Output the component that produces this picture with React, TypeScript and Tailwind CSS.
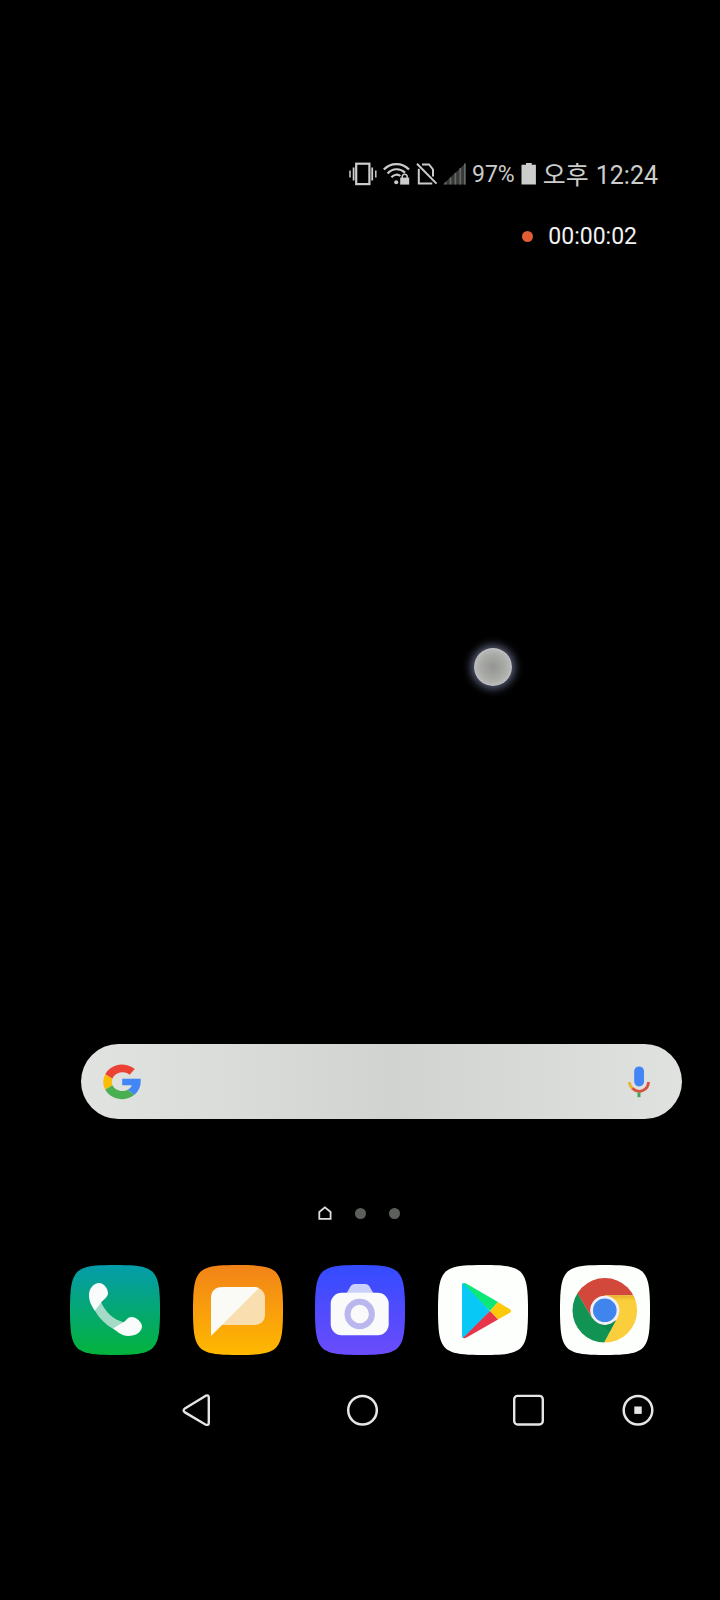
import type { ReactNode } from 'react';

const SQUIRCLE =
  'M45 0C60 0 70 .6 76.6 3.2C82 5.5 84.5 8 86.8 13.4C89.4 20 90 30 90 45C90 60 89.4 70 86.8 76.6C84.5 82 82 84.5 76.6 86.8C70 89.4 60 90 45 90C30 90 20 89.4 13.4 86.8C8 84.5 5.5 82 3.2 76.6C.6 70 0 60 0 45C0 30 .6 20 3.2 13.4C5.5 8 8 5.5 13.4 3.2C20 .6 30 0 45 0Z';

function AppIcon({ id, label, from, to, children }: { id: string; label: string; from: string; to: string; children: ReactNode }) {
  return (
    <button type="button" aria-label={label}>
      <svg viewBox="0 0 90 90" className="block size-[90px]">
        <defs>
          <linearGradient id={id} x1="0" y1="0" x2="0" y2="1">
            <stop offset="0" stopColor={from} />
            <stop offset="1" stopColor={to} />
          </linearGradient>
        </defs>
        <path d={SQUIRCLE} fill={`url(#${id})`} />
        {children}
      </svg>
    </button>
  );
}

function StatusBar() {
  return (
    <header className="flex h-7 items-center justify-end pr-[62px] text-[#cbcdcb]">
      <svg viewBox="0 0 28 24" className="h-6 w-7" fill="none" stroke="currentColor">
        <rect x="7.2" y="1.7" width="13.2" height="20.4" strokeWidth="2.2" />
        <path d="M4.6 5.5v13M23.2 5.5v13" strokeWidth="1.8" />
        <path d="M1 8.5v7M26.8 8.5v7" strokeWidth="1.5" />
      </svg>
      <svg viewBox="0 0 27 24" className="ml-1.5 h-6 w-[27px]" fill="none" stroke="currentColor" strokeWidth="2.2">
        <path d="M.8 7.5C7.6.2 19.2.2 26 7.5" />
        <path d="M4.6 11.4C9.7 6 17 6 22 10.6" />
        <path d="M8.4 15.3C11 12.2 15 12 17.3 14" />
        <circle cx="13.2" cy="20.3" r="2" fill="currentColor" stroke="none" />
        <path d="M19.2 16.3V15a2.5 2.8 0 0 1 5 0v1.3" strokeWidth="1.5" />
        <rect x="17.2" y="15.6" width="9" height="7" fill="currentColor" stroke="none" />
      </svg>
      <svg viewBox="0 0 22 24" className="ml-1.5 h-6 w-[22px]" fill="none" stroke="currentColor" strokeWidth="2">
        <path d="M6 2.4H13L17 7.5V14.5" />
        <path d="M2.8 6.8V21.4H16.3" />
        <path d="M1 1.7L20.5 21.6" />
      </svg>
      <svg viewBox="0 0 24 24" className="ml-1 h-6 w-6">
        <path d="M23.5 1.2V22.5H.8Z" fill="#383a38" />
        <path d="M3.5 20V22.5M8.5 15.5V22.5M13.4 11V22.5M18.3 6V22.5M22.8 1.5V22.5" stroke="#686a68" strokeWidth="1.6" />
      </svg>
      <span className="ml-1.5 pt-0.5 font-['Roboto',sans-serif] text-[23px] leading-7">97%</span>
      <svg viewBox="0 0 16 24" className="ml-1.5 h-6 w-4" fill="currentColor">
        <path d="M5 .9H10.7V2.7H14.9V22.5H.5V2.7H5Z" />
      </svg>
      <time className="ml-1.5 flex items-baseline gap-[7px] text-[25px] leading-7">
        <span className="font-['Noto_Sans_CJK_KR',sans-serif]">오후</span>
        <span className="font-['Roboto',sans-serif]">12:24</span>
      </time>
    </header>
  );
}

function SearchBar() {
  return (
    <form
      role="search"
      className="mr-[38px] ml-[81px] flex h-[75px] items-center rounded-full bg-[linear-gradient(90deg,#e0e3df,#dadcd9_25%,#d1d3d0_52%,#d9dbd8_78%,#e0e2df)] pr-8 pl-[22px]"
      onSubmit={(event) => event.preventDefault()}
    >
      <svg viewBox="0 0 38 36" className="h-9 w-[38px] shrink-0" aria-hidden="true">
        <path d="M31.8 5A19 17.6 0 0 0 2.2 10.2L9.4 14.8A10.6 9.8 0 0 1 26.6 10.7Z" fill="#ea4335" />
        <path d="M2.2 10.2A18 17.5 0 0 0 2.2 25.8L9.4 21.3A10.5 10 0 0 1 9.4 14.8Z" fill="#fbbc05" />
        <path d="M2.2 25.8A19 17.6 0 0 0 31.5 30.8L24.8 25.8A11 9.8 0 0 1 9.4 21.3Z" fill="#4aaf50" />
        <path d="M19.2 14.8H37.6C38.3 21.5 36.2 27 31.5 30.8L24.8 25.8C27 24.5 28.2 23 28.8 21.3H19.2Z" fill="#4285f4" />
      </svg>
      <input type="search" aria-label="Google 검색" className="h-full min-w-0 flex-1 bg-transparent px-4 font-['Roboto','Noto_Sans_CJK_KR',sans-serif] text-2xl text-gray-800 outline-none" />
      <button type="button" aria-label="음성 검색">
        <svg viewBox="0 0 22 32" className="block h-8 w-[22px]" fill="none">
          <rect x="6.2" y=".4" width="9.8" height="20" rx="4.9" fill="#4285f4" />
          <path d="M1.5 16C1.5 18.6 2.7 21 4.7 22.7" stroke="#eab32e" strokeWidth="2.8" />
          <path d="M4.4 22.4C11 28.3 20.3 24.3 20.5 16" stroke="#d95040" strokeWidth="2.8" />
          <path d="M11 26.5V31.2" stroke="#43a35a" strokeWidth="3" />
        </svg>
      </button>
    </form>
  );
}

function Dock() {
  return (
    <nav aria-label="앱" className="mt-11 flex justify-between px-[70px]">
      <AppIcon id="phone-bg" label="전화" from="#059cab" to="#03b33c">
        <path d="M25 46C30 54 36 60 43.5 64L53 57C43 54 36 48 31 37Z" fill="#a5d9c8" />
        <path d="M25 46C20 39 19 34 19 30C19 23 24 18 29 18C34 18 38 24 38 28C38 32 34 34 31.5 37Z" fill="#fafcfb" />
        <path d="M43 63.5L52.5 57.5C56 57 57 52 61.5 52C66 52 72 57 72 61C72 67 66 71 58 71C53 71 48 67.5 43 63.5Z" fill="#fafcfb" />
      </AppIcon>
      <AppIcon id="message-bg" label="메시지" from="#f28318" to="#ffb900">
        <path d="M65 23C70 25 72 29 72 33V49C72 56 68 60 61 60H28Z" fill="#f9dfb0" />
        <path d="M18 71V33C18 26 22 22 29 22H60C63 22 64.5 22.3 66 23Z" fill="#fafaf7" />
      </AppIcon>
      <AppIcon id="camera-bg" label="카메라" from="#344bff" to="#6b4cfb">
        <path d="M30 29C35 26 34 19 40 19H50C56 19 55 26 60 29Z" fill="#cbd0fb" />
        <rect x="15.7" y="27.7" width="58" height="42.5" rx="11" fill="#fafafa" />
        <circle cx="44.7" cy="49" r="12.2" fill="none" stroke="#bab7ee" strokeWidth="6" />
      </AppIcon>
      <AppIcon id="play-bg" label="Play 스토어" from="#fdfffd" to="#fdfffd">
        <path d="M24 20Q24 17 27 18.5L52 46L27 72.5Q24 74 24 71Z" fill="#08c9f5" />
        <path d="M25 18Q27 17.5 29 19L60 37L52 46Z" fill="#0be878" />
        <path d="M60 37L72 44.3Q74 46 72 47.7L60 54.5L52 46Z" fill="#fdc90b" />
        <path d="M52 46L60 54.5L29 72.2Q27 73.5 25 73Z" fill="#e93549" />
      </AppIcon>
      <AppIcon id="chrome-bg" label="Chrome" from="#fdfffd" to="#fdfffd">
        <defs>
          <clipPath id="chrome-disc">
            <circle cx="44.8" cy="45.3" r="32.3" />
          </clipPath>
          <linearGradient id="chrome-shade" x1="0" y1="0" x2="0" y2="1">
            <stop offset="0" stopColor="#e8b22c" />
            <stop offset="1" stopColor="#fbcf3c" />
          </linearGradient>
        </defs>
        <g clipPath="url(#chrome-disc)">
          <path d="M10 10H80V30.5H45L32 52.7L18.5 30.5L10 25Z" fill="#d2483a" />
          <path d="M44.8 30.5H80V80H42.5L57.5 52.7Z" fill="#fbcf3c" />
          <path d="M44.8 30.5H78L76 36H54Z" fill="url(#chrome-shade)" />
          <path d="M17.8 29L32 52.7L45 60L56 55.3L42.8 80H10V29Z" fill="#119453" />
          <path d="M34 56L45 60L56 55.3L50 66.5Z" fill="#0b7f47" opacity=".5" />
        </g>
        <circle cx="44.8" cy="45.3" r="14.6" fill="#eeeff7" />
        <circle cx="44.8" cy="45.3" r="11.8" fill="#4085ee" />
      </AppIcon>
    </nav>
  );
}

function SystemNavigation() {
  return (
    <nav aria-label="시스템" className="mt-[39px] flex pr-[66px] pl-[25%] text-[#e6e7e5]">
      <div className="flex flex-1 justify-between">
        <button type="button" aria-label="뒤로">
          <svg viewBox="0 0 32 32" className="block size-8" fill="none" stroke="currentColor" strokeWidth="2.4" strokeLinejoin="round">
            <path d="M25.4 1.9Q28.8.3 28.8 3.7V28.6Q28.8 32 25.4 30.5L4.9 18.4Q2.4 16.4 4.9 14.4Z" />
          </svg>
        </button>
        <button type="button" aria-label="홈">
          <svg viewBox="0 0 32 32" className="block size-8" fill="none" stroke="currentColor" strokeWidth="2.5">
            <circle cx="16.5" cy="16.3" r="14.3" />
          </svg>
        </button>
        <button type="button" aria-label="최근 앱">
          <svg viewBox="0 0 32 32" className="block size-8" fill="none" stroke="currentColor" strokeWidth="2.4">
            <rect x="2.2" y="1.9" width="28.6" height="28.6" rx="3.4" />
          </svg>
        </button>
      </div>
      <button type="button" aria-label="화면 고정" className="ml-[78px]">
        <svg viewBox="0 0 32 32" className="block size-8" fill="none" stroke="currentColor" strokeWidth="2.5">
          <circle cx="16" cy="16.2" r="14.3" />
          <rect x="12.3" y="12.5" width="7.4" height="7.4" fill="currentColor" stroke="none" />
        </svg>
      </button>
    </nav>
  );
}

export default function App() {
  return (
    <main className="relative flex min-h-screen flex-col bg-black pt-[160px] pb-[174px]">
      <StatusBar />
      <div className="mt-[33px] flex items-center justify-end gap-[15px] pr-[83px] font-['Roboto',sans-serif] text-[23px] text-[#f2f2f2]">
        <span className="size-[11px] rounded-full bg-[#e05d36]" />
        <time className="pt-0.5 leading-7">00:00:02</time>
      </div>
      <div className="flex-1" />
      <SearchBar />
      <div className="mt-[86px] flex h-4 items-center justify-center gap-[23px] pr-0.5">
        <svg viewBox="0 0 14 16" className="h-4 w-3.5" fill="none" stroke="#dededc" strokeWidth="1.8">
          <path d="M1.3 13.8V7L6.9 2.4L12.6 7V13.8Z" />
        </svg>
        <span className="size-[11px] rounded-full bg-[#5d5f5d]" />
        <span className="size-[11px] rounded-full bg-[#5d5f5d]" />
      </div>
      <Dock />
      <SystemNavigation />
      <div className="absolute top-[648px] left-[474px] size-[38px] rounded-full bg-[radial-gradient(circle,#949592,#a8aaa6_45%,#b6b7b5_64%,#c4c5cd_70%)] shadow-[0_0_8px_3px_rgba(150,158,200,0.6)]" />
    </main>
  );
}
